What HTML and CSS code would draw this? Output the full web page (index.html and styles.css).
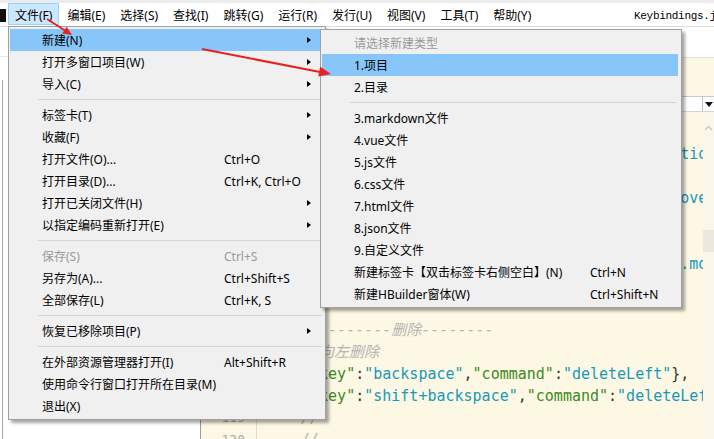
FILE: index.html
```html
<!DOCTYPE html>
<html>
<head>
    <meta charset="utf-8">
    <title>HBuilderX - Keybindings.json</title>
    <link rel="stylesheet" href="styles.css">
</head>
<body>
    <div class="app">
        <div class="top-strip"></div>
        <div class="menubar">
            <div class="app-icon"></div>
            <div class="mb-item active">文件(F)</div>
            <div class="mb-item">编辑(E)</div>
            <div class="mb-item">选择(S)</div>
            <div class="mb-item">查找(I)</div>
            <div class="mb-item">跳转(G)</div>
            <div class="mb-item">运行(R)</div>
            <div class="mb-item">发行(U)</div>
            <div class="mb-item">视图(V)</div>
            <div class="mb-item">工具(T)</div>
            <div class="mb-item">帮助(Y)</div>
            <div class="doc-title">Keybindings.json</div>
        </div>

        <div class="workspace">
            <div class="sidebar">
                <div class="side-head"></div>
                <div class="side-tree"></div>
            </div>
            <div class="editor">
                <div class="tabbar"></div>
                <div class="infobar"></div>
                <div class="toolbar">
                    <div class="dropdown"><span class="drop-caret"></span></div>
                </div>
                <div class="code-area">
                    <div class="gutter">
                        <div>106</div><div>107</div><div>108</div><div>109</div><div>110</div>
                        <div>111</div><div>112</div><div>113</div><div>114</div><div>115</div>
                        <div>116</div><div>117</div><div>118</div><div>119</div><div>120</div>
                    </div>
                    <div class="code">
                        <div class="line"><span class="c">//选择相同的词</span></div>
                        <div class="line"><span class="p">{</span><span class="k">"key"</span><span class="p">:</span><span class="s">"ctrl+shift+l"</span><span class="p">,</span><span class="k">"command"</span><span class="p">:</span><span class="s">"editor.action.selectHighlights"</span><span class="p">},</span></div>
                        <div class="line"><span class="c">//向上移动行</span></div>
                        <div class="line"><span class="p">{</span><span class="k">"key"</span><span class="p">:</span><span class="s">"alt+up"</span><span class="p">,</span><span class="k">"command"</span><span class="p">:</span><span class="s">"editor.action.moveLinesUpAction"</span><span class="p">},</span></div>
                        <div class="line"></div>
                        <div class="line"><span class="c">//向下移动行</span></div>
                        <div class="line"><span class="p">{</span><span class="k">"key"</span><span class="p">:</span><span class="s">"alt+down"</span><span class="p">,</span><span class="k">"command"</span><span class="p">:</span><span class="s">"editor.action.moveLinesDownAction"</span><span class="p">},</span></div>
                        <div class="line"></div>
                        <div class="line"></div>
                        <div class="line"><span class="c">//--------删除--------</span></div>
                        <div class="line"><span class="c">//向左删除</span></div>
                        <div class="line"><span class="p">{</span><span class="k">"key"</span><span class="p">:</span><span class="s">"backspace"</span><span class="p">,</span><span class="k">"command"</span><span class="p">:</span><span class="s">"deleteLeft"</span><span class="p">},</span></div>
                        <div class="line"><span class="p">{</span><span class="k">"key"</span><span class="p">:</span><span class="s">"shift+backspace"</span><span class="p">,</span><span class="k">"command"</span><span class="p">:</span><span class="s">"deleteLeft"</span><span class="p">},</span></div>
                        <div class="line"><span class="c">//</span></div>
                        <div class="line"><span class="c">//</span></div>
                    </div>
                    <div class="vscroll">
                        <svg class="scroll-up" width="11" height="10" viewBox="0 0 11 10"><path d="M2 7 L5.5 3.5 L9 7" fill="none" stroke="#c8c8c8" stroke-width="1.3"/></svg>
                        <div class="scroll-thumb"></div>
                    </div>
                </div>
            </div>
        </div>

        <!-- 文件菜单 -->
        <div class="menu file-menu">
            <div class="menu-item hover"><span class="label">新建(N)</span><span class="key"></span><span class="sub-arrow"></span></div>
            <div class="menu-item"><span class="label">打开多窗口项目(W)</span><span class="key"></span><span class="sub-arrow"></span></div>
            <div class="menu-item"><span class="label">导入(C)</span><span class="key"></span><span class="sub-arrow"></span></div>
            <div class="menu-sep"></div>
            <div class="menu-item"><span class="label">标签卡(T)</span><span class="key"></span><span class="sub-arrow"></span></div>
            <div class="menu-item"><span class="label">收藏(F)</span><span class="key"></span><span class="sub-arrow"></span></div>
            <div class="menu-item"><span class="label">打开文件(O)...</span><span class="key">Ctrl+O</span></div>
            <div class="menu-item"><span class="label">打开目录(D)...</span><span class="key">Ctrl+K, Ctrl+O</span></div>
            <div class="menu-item"><span class="label">打开已关闭文件(H)</span><span class="key"></span><span class="sub-arrow"></span></div>
            <div class="menu-item"><span class="label">以指定编码重新打开(E)</span><span class="key"></span><span class="sub-arrow"></span></div>
            <div class="menu-sep"></div>
            <div class="menu-item disabled"><span class="label">保存(S)</span><span class="key">Ctrl+S</span></div>
            <div class="menu-item"><span class="label">另存为(A)...</span><span class="key">Ctrl+Shift+S</span></div>
            <div class="menu-item"><span class="label">全部保存(L)</span><span class="key">Ctrl+K, S</span></div>
            <div class="menu-sep"></div>
            <div class="menu-item"><span class="label">恢复已移除项目(P)</span><span class="key"></span><span class="sub-arrow"></span></div>
            <div class="menu-sep"></div>
            <div class="menu-item"><span class="label">在外部资源管理器打开(I)</span><span class="key">Alt+Shift+R</span></div>
            <div class="menu-item"><span class="label">使用命令行窗口打开所在目录(M)</span><span class="key"></span></div>
            <div class="menu-item"><span class="label">退出(X)</span><span class="key"></span></div>
        </div>

        <!-- 新建子菜单 -->
        <div class="menu sub-menu">
            <div class="menu-item disabled"><span class="label">请选择新建类型</span></div>
            <div class="menu-item hover"><span class="label">1.项目</span></div>
            <div class="menu-item"><span class="label">2.目录</span></div>
            <div class="menu-sep"></div>
            <div class="menu-item"><span class="label">3.markdown文件</span></div>
            <div class="menu-item"><span class="label">4.vue文件</span></div>
            <div class="menu-item"><span class="label">5.js文件</span></div>
            <div class="menu-item"><span class="label">6.css文件</span></div>
            <div class="menu-item"><span class="label">7.html文件</span></div>
            <div class="menu-item"><span class="label">8.json文件</span></div>
            <div class="menu-item"><span class="label">9.自定义文件</span></div>
            <div class="menu-item"><span class="label">新建标签卡【双击标签卡右侧空白】(N)</span><span class="key">Ctrl+N</span></div>
            <div class="menu-item"><span class="label">新建HBuilder窗体(W)</span><span class="key">Ctrl+Shift+N</span></div>
        </div>

        <!-- 标注箭头 -->
        <svg class="marks" width="714" height="439" viewBox="0 0 714 439">
            <line x1="47" y1="19" x2="65" y2="30.5" stroke="#e8201f" stroke-width="2"/>
            <polygon points="72,35 62.2,33.5 66.6,26.7" fill="#e8201f"/>
            <line x1="202" y1="49" x2="320" y2="72" stroke="#e8201f" stroke-width="2"/>
            <polygon points="331,74 318.2,76.6 320.2,66.8" fill="#e8201f"/>
        </svg>
    </div>
</body>
</html>
```

FILE: styles.css
```css
* {
    box-sizing: border-box;
    margin: 0;
    padding: 0;
}

html, body {
    width: 714px;
    height: 439px;
    overflow: hidden;
}

body {
    font-family: "Noto Sans", "Noto Sans CJK SC", sans-serif;
    font-size: 12px;
    color: #000;
    background: #fff;
}

.app {
    position: relative;
    width: 714px;
    height: 439px;
    display: flex;
    flex-direction: column;
}

.top-strip {
    height: 3px;
    background: #ececec;
}

/* menubar */
.menubar {
    height: 24px;
    display: flex;
    align-items: flex-start;
    background: #fff;
    border-bottom: 1px solid #dcdcdc;
}

.app-icon {
    width: 6px;
    height: 13px;
    margin-top: 6px;
    margin-right: 2px;
    background: #111;
}

.mb-item {
    height: 22px;
    padding: 2px 6px 0;
    line-height: 20px;
    border: 1px solid transparent;
    margin-right: 1px;
    white-space: nowrap;
}

.mb-item.active {
    background: #cce8ff;
    border-color: #99d1ff;
}

.doc-title {
    margin-left: auto;
    width: 80px;
    overflow: hidden;
    white-space: nowrap;
    font-family: "Liberation Mono", monospace;
    font-size: 11px;
    letter-spacing: -0.3px;
    line-height: 24px;
    padding-top: 1px;
}

/* workspace */
.workspace {
    flex: 1;
    display: flex;
    min-height: 0;
}

.sidebar {
    width: 201px;
    background: #fff;
    border-right: 1px solid #9a9a9a;
    display: flex;
    flex-direction: column;
}

.side-head {
    height: 30px;
    border-bottom: 1px solid #e8e8e8;
}

.side-tree {
    flex: 1;
    margin-top: 23px;
    margin-left: 2px;
    border-left: 1px solid #a8a8a8;
}

.editor {
    flex: 1;
    display: flex;
    flex-direction: column;
    min-width: 0;
}

.tabbar {
    height: 31px;
    background: #fff;
    border-bottom: 1px solid #e2e2e2;
}

.infobar {
    height: 39px;
    background: #fdf8e4;
    border-bottom: 1px solid #c9c9c9;
}

.toolbar {
    height: 15px;
    background: #fff;
    border-bottom: 1px solid #d6d6d6;
    display: flex;
    justify-content: flex-end;
}

.dropdown {
    width: 12px;
    border-left: 1px solid #bdbdbd;
    display: flex;
    align-items: center;
    justify-content: center;
}

.drop-caret {
    width: 0;
    height: 0;
    border-left: 4px solid transparent;
    border-right: 4px solid transparent;
    border-top: 5px solid #111;
}

/* code */
.code-area {
    flex: 1;
    display: flex;
    background: #fdf8e4;
    min-height: 0;
    overflow: hidden;
}

.gutter {
    width: 56px;
    padding-top: 9px;
    padding-right: 11px;
    border-right: 1px solid #e3dec9;
    text-align: right;
    font-family: "DejaVu Sans Mono", monospace;
    font-size: 13px;
    line-height: 22px;
    color: #a8a8a8;
}

.code {
    flex: 1;
    min-width: 0;
    overflow: hidden;
    padding-top: 9px;
    padding-left: 44px;
    font-family: "DejaVu Sans Mono", "Noto Sans CJK SC", monospace;
    font-size: 15px;
    line-height: 22px;
}

.line {
    height: 22px;
    white-space: pre;
}

.p { color: #333; }
.k { color: #3b8a1c; }
.s { color: #1798b8; }
.c { color: #b4b4b4; font-style: italic; }

.vscroll {
    width: 11px;
    background: #faf6ea;
    padding-top: 11px;
}

.scroll-up {
    display: block;
}

.scroll-thumb {
    margin-top: 97px;
    height: 22px;
    background: #e9e7de;
}

/* popup menus */
.menu {
    position: absolute;
    background: #f0f0f0;
    border: 1px solid #a0a0a0;
    box-shadow: 3px 3px 3px rgba(0, 0, 0, 0.35);
    padding: 2px 1px;
}

.file-menu {
    left: 8px;
    top: 26px;
    width: 318px;
}

.sub-menu {
    left: 320px;
    top: 29px;
    width: 362px;
    padding-right: 3px;
}

.menu-item {
    display: flex;
    align-items: center;
    height: 22px;
    padding-top: 2px;
    line-height: 20px;
    padding-left: 32px;
    white-space: nowrap;
}

.menu-item.hover {
    background: #88c6f9;
}

.menu-item.disabled {
    color: #9a9a9a;
}

.file-menu .label {
    width: 182px;
}

.sub-menu .label {
    width: 236px;
}

.key {
    flex: 1;
}

.sub-arrow {
    width: 0;
    height: 0;
    margin-right: 13px;
    margin-bottom: 2px;
    border-left: 4px solid #000;
    border-top: 3.5px solid transparent;
    border-bottom: 3.5px solid transparent;
}

.menu-sep {
    height: 9px;
    padding-top: 4px;
    margin-left: 28px;
    margin-right: 2px;
}

.menu-sep::after {
    content: "";
    display: block;
    height: 1px;
    background: #d5d5d5;
}

.marks {
    position: absolute;
    left: 0;
    top: 0;
    pointer-events: none;
}
```
